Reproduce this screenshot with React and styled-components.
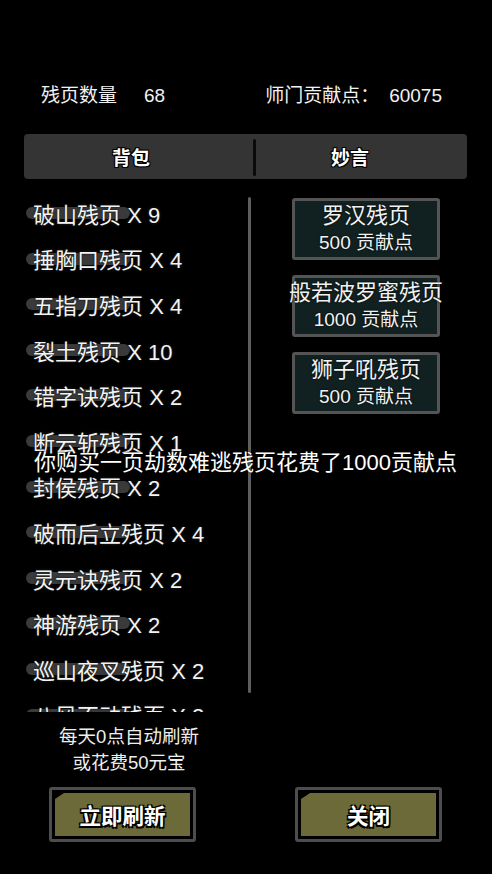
import React from 'react'
import styled, { createGlobalStyle } from 'styled-components'

const GlobalStyle = createGlobalStyle`
  body {
    margin: 0;
    background: #000;
    color: #fff;
    font-family: "Liberation Sans", "Noto Sans CJK SC", sans-serif;
  }
`

const Screen = styled.div`
  position: relative;
  width: 492px;
  height: 874px;
  overflow: hidden;
  display: flex;
  flex-direction: column;
  background: #000;
`

const Header = styled.div`
  display: flex;
  justify-content: space-between;
  padding: 84px 50px 0 41px;
  font-size: 19px;
  line-height: 24px;
  color: #f2f2f2;
`

const Stat = styled.div`
  display: flex;
  gap: ${p => p.$gap}px;
`

const Tabs = styled.div`
  display: flex;
  align-items: stretch;
  height: 45px;
  margin: 26px 25px 0 24px;
  background: #343434;
  border-radius: 4px;
`

const Tab = styled.div`
  box-sizing: border-box;
  flex: ${p => (p.$width ? `0 0 ${p.$width}px` : '1')};
  display: flex;
  align-items: center;
  justify-content: center;
  padding-right: ${p => p.$pad}px;
  font-size: 19px;
  font-weight: 700;
  color: #fff;
  text-shadow: -1px -1px 0 #000, 1px -1px 0 #000, -1px 1px 0 #000, 1px 1px 0 #000,
    0 0 2px #000;
`

const TabSplit = styled.div`
  width: 3px;
  margin: 5px 0 3px;
  background: #0a0a0a;
  border-radius: 2px;
`

const Body = styled.div`
  position: relative;
  display: flex;
  height: 533px;
`

const List = styled.div`
  width: 248px;
  margin-top: 11px;
  height: 522px;
  overflow: hidden;
`

const Item = styled.div`
  position: relative;
  height: 45.6px;
  display: flex;
  align-items: center;
  padding-left: 33px;
  font-size: 22px;
  white-space: nowrap;
  color: #f4f4f4;
  text-shadow: 0 0 2px #000, 0 0 3px rgba(60, 60, 60, 0.9);

  &::before {
    content: '';
    position: absolute;
    left: 26px;
    top: 17px;
    width: 104px;
    height: 12px;
    border-radius: 6px;
    background: #3a3a3a;
  }

  span {
    position: relative;
  }
`

const Rule = styled.div`
  width: 3px;
  margin-top: 18px;
  height: 496px;
  background: #5e5e5e;
  border-radius: 2px;
`

const Shop = styled.div`
  display: flex;
  flex-direction: column;
  gap: 15px;
  padding: 19px 0 0 41px;
`

const Card = styled.div`
  width: 148px;
  height: 62px;
  box-sizing: border-box;
  border: 3px solid #545454;
  border-radius: 3px;
  background: #112020;
  display: flex;
  flex-direction: column;
  align-items: center;
  justify-content: center;
  white-space: nowrap;
  color: #f2f2f2;
  text-shadow: 0 0 2px #000;
`

const CardName = styled.div`
  font-size: 22px;
  line-height: 28px;
`

const CardCost = styled.div`
  font-size: 19px;
  line-height: 26px;
`

const Toast = styled.div`
  position: absolute;
  left: 34px;
  top: 271px;
  font-size: 22px;
  line-height: 26px;
  white-space: nowrap;
  color: #fff;
  text-shadow: 0 0 2px #000;
`

const Note = styled.div`
  width: 246px;
  padding-left: 12px;
  box-sizing: border-box;
  margin-top: 12px;
  text-align: center;
  font-size: 18.5px;
  line-height: 26px;
  color: #eee;
`

const Actions = styled.div`
  display: flex;
  justify-content: space-between;
  padding: 0 50px 0 49px;
  margin-top: 11px;
`

const Button = styled.button`
  width: 147px;
  height: 55px;
  box-sizing: border-box;
  padding: 3px;
  border: 3px solid #4d4d4d;
  border-radius: 3px;
  background: #000;
  display: flex;
  cursor: pointer;
`

const Face = styled.span`
  flex: 1;
  display: flex;
  align-items: center;
  justify-content: center;
  background: #6c6a38;
  clip-path: polygon(0 6px, 9px 0, 100% 0, 100% 100%, 0 100%);
  font-family: "Noto Sans CJK SC", sans-serif;
  font-size: 21.5px;
  font-weight: 700;
  color: #fff;
  text-shadow: -1.5px -1.5px 0 #000, 1.5px -1.5px 0 #000, -1.5px 1.5px 0 #000,
    1.5px 1.5px 0 #000, 0 0 2px #000;
`

const pages = [
  ['破山残页', 9],
  ['捶胸口残页', 4],
  ['五指刀残页', 4],
  ['裂土残页', 10],
  ['错字诀残页', 2],
  ['断云斩残页', 1],
  ['封侯残页', 2],
  ['破而后立残页', 4],
  ['灵元诀残页', 2],
  ['神游残页', 2],
  ['巡山夜叉残页', 2],
  ['八风不动残页', 2],
]

const goods = [
  ['罗汉残页', 500],
  ['般若波罗蜜残页', 1000],
  ['狮子吼残页', 500],
]

const App = () => {
  return (
    <>
      <GlobalStyle />
      <Screen>
        <Header>
          <Stat $gap={27}>
            <span>残页数量</span>
            <span>68</span>
          </Stat>
          <Stat $gap={10}>
            <span>师门贡献点：</span>
            <span>60075</span>
          </Stat>
        </Header>

        <Tabs>
          <Tab $width={229} $pad={15}>背包</Tab>
          <TabSplit />
          <Tab $pad={23}>妙言</Tab>
        </Tabs>

        <Body>
          <List>
            {pages.map(([name, n]) => (
              <Item key={name}>
                <span>{name} X {n}</span>
              </Item>
            ))}
          </List>
          <Rule />
          <Shop>
            {goods.map(([name, cost]) => (
              <Card key={name}>
                <CardName>{name}</CardName>
                <CardCost>{cost} 贡献点</CardCost>
              </Card>
            ))}
          </Shop>
          <Toast>你购买一页劫数难逃残页花费了1000贡献点</Toast>
        </Body>

        <Note>
          每天0点自动刷新
          <br />
          或花费50元宝
        </Note>

        <Actions>
          <Button><Face>立即刷新</Face></Button>
          <Button><Face>关闭</Face></Button>
        </Actions>
      </Screen>
    </>
  )
}

export default App
